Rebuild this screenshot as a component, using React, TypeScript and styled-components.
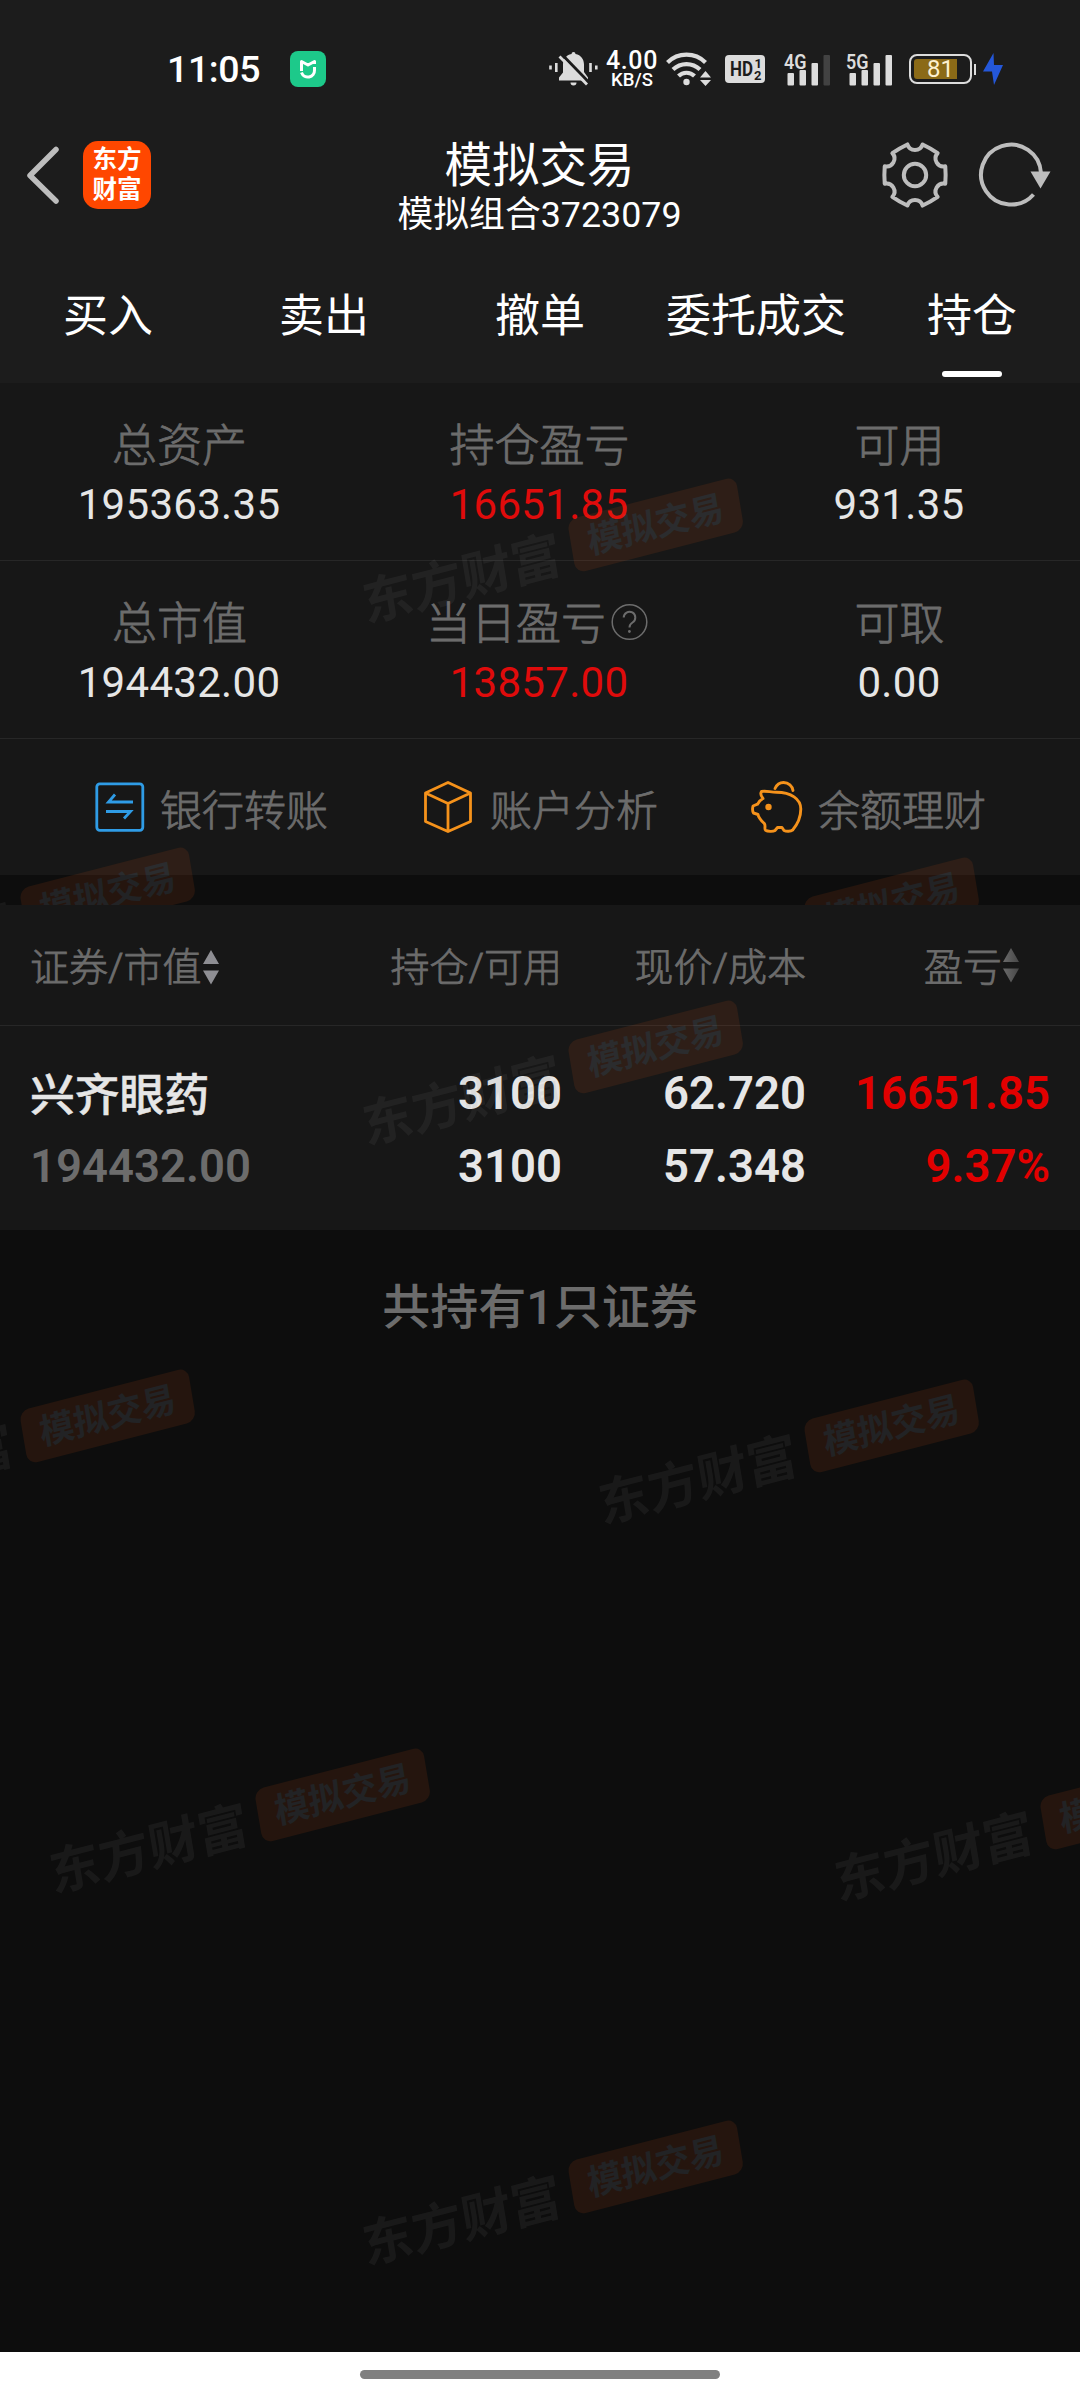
import React from "react";
import styled, { createGlobalStyle } from "styled-components";

const GlobalStyle = createGlobalStyle`
  * { box-sizing: border-box; }
  body { margin: 0; background: #0d0d0d; }
  svg { flex: none; overflow: visible; }
`;

const Screen = styled.div`
  width: 1080px;
  height: 2400px;
  display: flex;
  flex-direction: column;
  overflow: hidden;
  background: #0d0d0d;
  color: #fff;
  font-family: Roboto, "Noto Sans CJK SC", sans-serif;
`;

/* ---------- status bar ---------- */

const TopArea = styled.div`
  background: #1c1c1c;
  height: 383px;
  flex: none;
`;

const StatusBar = styled.div`
  height: 102px;
  padding: 36px 77px 0 167px;
  display: flex;
  align-items: flex-start;
  justify-content: space-between;
`;

const StatusGroup = styled.div`
  height: 66px;
  display: flex;
  align-items: center;
`;

const Clock = styled.span`
  width: 123px;
  font-size: 37.5px;
  line-height: 65px;
  font-weight: 500;
  letter-spacing: -0.4px;
`;

const StatusItem = styled.div<{ $gap: number }>`
  display: flex;
  flex: none;
  margin-left: ${(p) => p.$gap}px;
`;

const Speed = styled.div`
  width: 52px;
  display: flex;
  flex-direction: column;
  align-items: center;
  font-weight: 500;
`;

const SpeedValue = styled.span`
  font-size: 25px;
  line-height: 22px;
  height: 21px;
  letter-spacing: 0.6px;
`;

const SpeedUnit = styled.span`
  font-size: 18.5px;
  line-height: 18px;
`;

const HdBadge = styled.div`
  width: 40px;
  height: 28px;
  border-radius: 4px;
  background: #dcdcdc;
  color: #1c1c1c;
  display: flex;
  align-items: center;
  justify-content: center;
`;

const Battery = styled.div`
  width: 63px;
  height: 30px;
  border: 2px solid #dcdcdc;
  border-radius: 8px;
  padding: 3px;
  display: flex;
  position: relative;
`;

const BatteryFill = styled.div`
  width: 43px;
  height: 20px;
  border-radius: 3px 0 0 3px;
  background: #8b6a17;
`;

const BatteryText = styled.span`
  position: absolute;
  inset: 0;
  text-align: center;
  font-size: 24px;
  line-height: 27px;
  font-weight: 400;
  color: #fdf0cf;
`;

const BatteryCap = styled.div`
  width: 2px;
  height: 11px;
  margin-left: 2px;
  align-self: center;
  background: #dcdcdc;
`;

/* ---------- header ---------- */

const Header = styled.header`
  height: 145px;
  display: grid;
  grid-template-columns: 1fr auto 1fr;
  align-items: center;
  padding: 0 27px 0 26px;
`;

const HeaderSide = styled.div<{ $end?: boolean }>`
  display: flex;
  align-items: center;
  justify-content: ${(p) => (p.$end ? "flex-end" : "flex-start")};
  gap: ${(p) => (p.$end ? 30 : 24)}px;
  padding-right: ${(p) => (p.$end ? 2 : 0)}px;
`;

const Logo = styled.div`
  width: 68px;
  height: 68px;
  border-radius: 15px;
  background: #ff4700;
  display: flex;
  flex-direction: column;
  align-items: center;
  justify-content: center;
  font-size: 24.5px;
  line-height: 30px;
  font-weight: 700;
`;

const TitleBlock = styled.div`
  display: flex;
  flex-direction: column;
  align-items: center;
  padding-top: 23px;
`;

const Title = styled.h1`
  margin: 0;
  font-size: 47.5px;
  line-height: 58px;
  font-weight: 400;
`;

const Subtitle = styled.div`
  font-size: 35.8px;
  line-height: 40px;
`;

/* ---------- tabs ---------- */

const Tabs = styled.nav`
  display: grid;
  grid-template-columns: repeat(5, 1fr);
  height: 136px;
`;

const Tab = styled.div<{ $active?: boolean }>`
  position: relative;
  height: 136px;
  text-align: center;
  font-size: 45px;
  line-height: 139px;
  &::after {
    content: "";
    display: ${(p) => (p.$active ? "block" : "none")};
    position: absolute;
    left: 78px;
    bottom: 6px;
    width: 60px;
    height: 6px;
    border-radius: 3px;
    background: #fff;
  }
`;

/* ---------- account summary ---------- */

const thinText = `
  font-weight: 300;
  color: #6c6c6c;
  -webkit-text-stroke: 0.8px #6c6c6c;
`;

const SummarySection = styled.section`
  position: relative;
  overflow: hidden;
  height: 522px;
  flex: none;
`;

const SummaryRow = styled.div`
  height: 178px;
  display: grid;
  grid-template-columns: repeat(3, 1fr);
  padding-top: 38px;
  background: #171717;
  border-bottom: 1px solid #272727;
`;

const Stat = styled.div`
  display: flex;
  flex-direction: column;
  align-items: center;
`;

const StatLabel = styled.div<{ $help?: boolean }>`
  display: flex;
  align-items: center;
  gap: 5px;
  height: 52px;
  margin-right: ${(p) => (p.$help ? 6 : 1)}px;
  font-size: 45px;
  line-height: 52px;
  ${thinText}
  svg { margin-top: -6px; }
`;

const StatValue = styled.div<{ $up?: boolean }>`
  margin-right: 2px;
  font-size: 42px;
  line-height: 64px;
  letter-spacing: 0.3px;
  color: ${(p) => (p.$up ? "#e00b0b" : "#e6e6e6")};
`;

const Actions = styled.div`
  height: 136px;
  display: flex;
  justify-content: space-between;
  padding: 1px 94px 0 95px;
  background: #171717;
`;

const Action = styled.div<{ $gap: number; $shift?: number }>`
  display: flex;
  align-items: center;
  gap: ${(p) => p.$gap}px;
  margin-left: ${(p) => p.$shift ?? 0}px;
  font-size: 42px;
  ${thinText}
  svg { margin-top: -1px; }
`;

/* ---------- holdings table ---------- */

const HoldingsSection = styled.section`
  position: relative;
  overflow: hidden;
  flex: 1;
`;

const columns = `
  display: grid;
  grid-template-columns: 1fr 200px 244px 244px;
  padding: 0 30px 0 30px;
  background: #171717;
`;

const TableHead = styled.div`
  ${columns}
  height: 121px;
  padding-top: 5px;
  align-items: center;
  border-bottom: 1px solid #272727;
`;

const HeadCell = styled.div<{ $right?: boolean; $inset?: number }>`
  display: flex;
  align-items: center;
  justify-content: ${(p) => (p.$right ? "flex-end" : "flex-start")};
  padding-right: ${(p) => p.$inset ?? 0}px;
  font-size: 39px;
  line-height: 46px;
  ${thinText}
`;

const HoldingRow = styled.div`
  ${columns}
  height: 204px;
  padding-top: 31px;
  align-items: start;
`;

const Cell = styled.div<{ $right?: boolean; $tone?: "up" | "muted" }>`
  text-align: ${(p) => (p.$right ? "right" : "left")};
  height: 73px;
  font-size: 45.5px;
  line-height: 74px;
  font-weight: 600;
  color: ${(p) => (p.$tone === "up" ? "#e20000" : p.$tone === "muted" ? "#6c6c6c" : "#e6e6e6")};
`;

const StockName = styled(Cell)`
  font-size: 44.8px;
  line-height: 78px;
  font-weight: 500;
  -webkit-text-stroke: 0.5px #e6e6e6;
`;

const Total = styled.div`
  padding-top: 46px;
  text-align: center;
  font-size: 48px;
  line-height: 64px;
  font-weight: 500;
  color: #6c6c6c;
`;

const HomeBar = styled.footer`
  height: 48px;
  flex: none;
  padding-top: 18px;
  background: #fff;
`;

const HomePill = styled.div`
  width: 360px;
  height: 9px;
  margin: 0 auto;
  border-radius: 5px;
  background: #808080;
`;

/* ---------- watermark ---------- */

const Mark = styled.div`
  position: absolute;
  display: flex;
  align-items: center;
  width: 390px;
  height: 56px;
  opacity: 0.1;
  transform: rotate(-14.5deg) skewX(-5deg);
  white-space: nowrap;
  pointer-events: none;
`;

const MarkBrand = styled.span`
  width: 216px;
  margin-left: -4px;
  padding-top: 9px;
  font-size: 51px;
  line-height: 56px;
  font-weight: 700;
  color: #868686;
`;

const MarkBadge = styled.span`
  width: 174px;
  height: 54px;
  border-radius: 10px;
  background: #f35d17;
  color: #d7e1f5;
  text-align: center;
  font-size: 35px;
  line-height: 55px;
  font-weight: 700;
`;

// Offsets of the badge's top-left corner from the first mark of the tile.
const TILE: [number, number][] = [
  [569, 0],
  [21, 369],
  [805, 379],
  [256, 748],
  [1041, 756],
  [569, 1120],
];

function Watermark({ top, count }: { top: number; count: number }) {
  return (
    <>
      {TILE.slice(0, count).map(([x, y]) => (
        <Mark key={`${x}-${y}`} style={{ left: x - 209, top: top + y + 44 }}>
          <MarkBrand>东方财富</MarkBrand>
          <MarkBadge>模拟交易</MarkBadge>
        </Mark>
      ))}
    </>
  );
}

/* ---------- icons ---------- */

const ICON = "#dcdcdc";

const MiHomeIcon = () => (
  <svg width="36" height="36" viewBox="0 0 36 36">
    <rect width="36" height="36" rx="8" fill="#1dc98a" />
    <path d="M11.500 20V10.500L18 14l6.500-3.500V13" fill="none" stroke="#fff" strokeWidth="3" strokeLinejoin="round" />
    <path d="M24.500 16v3a6.700 6.700 0 0 1-13 2.600" fill="none" stroke="#fff" strokeWidth="3" />
  </svg>
);

const BellOffIcon = () => (
  <svg width="49" height="34" viewBox="0 0 49 34">
    <path d="M24.500 0a2 2 0 0 1 2 2c5.500 1 8.500 5.400 8.500 10.500v7.500l4 5.500V28.500H10V25.500l4-5V12.500C14 7.400 17 3 22.500 2a2 2 0 0 1 2-2z" fill={ICON} />
    <path d="M21.500 30.500h6a3 3 0 0 1-6 0z" fill={ICON} />
    <path d="M12.500 2l28 29" stroke="#1c1c1c" strokeWidth="3" />
    <path d="M10.500 4.500l27.500 28" stroke={ICON} strokeWidth="2.800" />
    <path d="M1.500 13.500v4M7.300 11v9M41.500 11v9M47.300 13.500v4" stroke={ICON} strokeWidth="2.600" />
  </svg>
);

const WifiIcon = () => (
  <svg width="45" height="34" viewBox="0 0 45 34">
    <g fill="none" stroke={ICON} strokeWidth="4.200">
      <path d="M1.500 10.500a27 27 0 0 1 38 0" />
      <path d="M7 17.500a19.500 19.500 0 0 1 27 0" />
      <path d="M12.500 24a11.500 11.500 0 0 1 16 0" />
    </g>
    <circle cx="20.500" cy="30" r="3.200" fill={ICON} />
    <path d="M39.500 19l5.500 6.500H34zM39.500 34l5.500-6H34z" fill={ICON} />
  </svg>
);

const HdMark = () => (
  <svg width="40" height="28" viewBox="0 0 40 28" fill="#1c1c1c" fontFamily="Roboto, sans-serif" fontWeight="700">
    <text x="5" y="21" fontSize="20" textLength="23" lengthAdjust="spacingAndGlyphs">HD</text>
    <text x="29.500" y="13" fontSize="13">1</text>
    <text x="29" y="25" fontSize="13">2</text>
  </svg>
);

const SignalIcon = ({ label, dim }: { label: string; dim?: boolean }) => (
  <svg width="47" height="33" viewBox="0 0 47 33" fill={ICON}>
    <text x="0" y="15.500" fontSize="20" fontWeight="600" fontFamily="Roboto, sans-serif" textLength="22.500" lengthAdjust="spacingAndGlyphs">
      {label}
    </text>
    <rect x="3.500" y="20" width="6.500" height="12.500" rx="1" />
    <rect x="15.500" y="17" width="6.500" height="15.500" rx="1" />
    <rect x="27.500" y="10" width="6.500" height="22.500" rx="1" />
    <rect x="39.500" y="2" width="6.500" height="30.500" rx="1" fill={dim ? "#424242" : ICON} />
  </svg>
);

const BoltIcon = () => (
  <svg width="20" height="32" viewBox="0 0 20 32">
    <path d="M10.500 0L0 18.500h9L11 32 20 12h-9z" fill="#2457d9" />
  </svg>
);

const BackIcon = () => (
  <svg width="33" height="58" viewBox="0 0 33 58">
    <path d="M30 3.500L4 29.500 30 55" fill="none" stroke="#bdbdbd" strokeWidth="5.500" strokeLinecap="round" strokeLinejoin="round" />
  </svg>
);

function gearPath(): string {
  const point = (deg: number, r: number) => {
    const a = (deg * Math.PI) / 180;
    return `${(34 + r * Math.cos(a)).toFixed(2)} ${(34 + r * Math.sin(a)).toFixed(2)}`;
  };
  let d = `M${point(-16, 31.5)}`;
  for (let k = 0; k < 6; k++) {
    d += `Q${point(k * 60, 31)} ${point(k * 60 + 16, 31.5)}`;
    d += `A8 8 0 0 0 ${point(k * 60 + 44, 31.5)}`;
  }
  return d + "Z";
}

const GearIcon = () => (
  <svg width="68" height="68" viewBox="0 0 68 68" fill="none" stroke="#bdbdbd" strokeWidth="4" strokeLinejoin="round">
    <path d={gearPath()} />
    <circle cx="34" cy="34" r="11.200" />
  </svg>
);

const RefreshIcon = () => (
  <svg width="72" height="68" viewBox="0 0 72 68">
    <path d="M54.500 53.500A30 30 0 1 1 62 32" fill="none" stroke="#bdbdbd" strokeWidth="4" />
    <path d="M51.500 30.500h20L61.500 47.500z" fill="#bdbdbd" />
  </svg>
);

const HelpIcon = () => (
  <svg width="37" height="38" viewBox="0 0 37 38" fill="none" stroke="#6c6c6c">
    <circle cx="18.500" cy="19" r="17.300" strokeWidth="1.500" />
    <path d="M12.700 14.500a5.800 5.800 0 1 1 8.800 5c-2.200 1.400-3 2.200-3 5" strokeWidth="2" />
    <circle cx="18.400" cy="28.500" r="1.400" fill="#6c6c6c" stroke="none" />
  </svg>
);

const TransferIcon = () => (
  <svg width="50" height="50" viewBox="0 0 50 50" fill="none" stroke="#2f9ce6" strokeWidth="2.800">
    <rect x="1.800" y="1.800" width="46" height="46.500" rx="3" />
    <path d="M38 20H13.500l6.500-7.500M11 29.500h24.500l-6.500 7" />
  </svg>
);

const CubeIcon = () => (
  <svg width="48" height="52" viewBox="0 0 48 52" fill="none" stroke="#f5921b" strokeWidth="2.800" strokeLinejoin="round">
    <path d="M24 1.500L46.500 12v28.500L24 50.500 1.500 40.500V12zM1.500 12L24 22.500 46.500 12M24 22.500v28" />
  </svg>
);

const PiggyIcon = () => (
  <svg width="52" height="52" viewBox="0 0 52 52" fill="none" stroke="#f5921b" strokeWidth="2.900" strokeLinejoin="round" strokeLinecap="round">
    <path d="M24 7.500C26 3 29 1.500 32.500 1.500c5 0 9 3.500 9.500 8" />
    <path d="M10.500 10.500c4-1 9 .7 15 .7C40 11.200 49.800 18 49.800 28c0 9-4.300 16.500-8.300 21.200-1.500 1.300-6.500 1.300-8.500.3l-2-3h-4.500l-2.500 3c-2 1.300-7.500 1-9.500-.3-1.500-1.200.5-4.700-1.200-6.700C9.500 39 7.500 37 7 33.500L2.500 32c-1.200-2-1-5-.5-7l4.500-1.800c1.500-2.700 2.500-4.200 5.500-5.700-2-2.300-3-4.500-1.500-7z" />
    <circle cx="17.500" cy="26" r="3.200" fill="#f5921b" stroke="none" />
  </svg>
);

const SortIcon = ({ dim }: { dim?: boolean }) => (
  <svg width="18" height="35" viewBox="0 0 18 35" stroke="none" style={{ marginTop: dim ? -5 : -1 }}>
    <defs>
      <linearGradient id="sortFade" x1="0" x2="1">
        <stop offset="0" stopColor="#6a6a6a" />
        <stop offset="1" stopColor="#474747" />
      </linearGradient>
    </defs>
    <path d="M9 0l8 14H1zM9 34.500l8-14H1z" fill={dim ? "url(#sortFade)" : "#8e8e93"} />
  </svg>
);

/* ---------- data ---------- */

const TABS = ["买入", "卖出", "撤单", "委托成交", "持仓"];

type StatData = { label: string; value: string; up?: boolean; help?: boolean };

const SUMMARY: StatData[][] = [
  [
    { label: "总资产", value: "195363.35" },
    { label: "持仓盈亏", value: "16651.85", up: true },
    { label: "可用", value: "931.35" },
  ],
  [
    { label: "总市值", value: "194432.00" },
    { label: "当日盈亏", value: "13857.00", up: true, help: true },
    { label: "可取", value: "0.00" },
  ],
];

export default function App() {
  return (
    <Screen>
      <GlobalStyle />
      <TopArea>
        <StatusBar>
          <StatusGroup>
            <Clock>11:05</Clock>
            <MiHomeIcon />
          </StatusGroup>
          <StatusGroup>
            <StatusItem $gap={0}><BellOffIcon /></StatusItem>
            <StatusItem $gap={8}>
              <Speed>
                <SpeedValue>4.00</SpeedValue>
                <SpeedUnit>KB/S</SpeedUnit>
              </Speed>
            </StatusItem>
            <StatusItem $gap={8}><WifiIcon /></StatusItem>
            <StatusItem $gap={14}><HdBadge><HdMark /></HdBadge></StatusItem>
            <StatusItem $gap={19}><SignalIcon label="4G" dim /></StatusItem>
            <StatusItem $gap={15}><SignalIcon label="5G" /></StatusItem>
            <StatusItem $gap={16}>
              <Battery>
                <BatteryFill />
                <BatteryText>81</BatteryText>
              </Battery>
              <BatteryCap />
            </StatusItem>
            <StatusItem $gap={7}><BoltIcon /></StatusItem>
          </StatusGroup>
        </StatusBar>
        <Header>
          <HeaderSide>
            <BackIcon />
            <Logo>
              <span>东方</span>
              <span>财富</span>
            </Logo>
          </HeaderSide>
          <TitleBlock>
            <Title>模拟交易</Title>
            <Subtitle>模拟组合3723079</Subtitle>
          </TitleBlock>
          <HeaderSide $end>
            <GearIcon />
            <RefreshIcon />
          </HeaderSide>
        </Header>
        <Tabs>
          {TABS.map((t) => (
            <Tab key={t} $active={t === "持仓"}>{t}</Tab>
          ))}
        </Tabs>
      </TopArea>

      <SummarySection>
        {SUMMARY.map((row, i) => (
          <SummaryRow key={i}>
            {row.map((s) => (
              <Stat key={s.label}>
                <StatLabel $help={s.help}>
                  {s.label}
                  {s.help ? <HelpIcon /> : null}
                </StatLabel>
                <StatValue $up={s.up}>{s.value}</StatValue>
              </Stat>
            ))}
          </SummaryRow>
        ))}
        <Actions>
          <Action $gap={15}><TransferIcon />银行转账</Action>
          <Action $gap={18} $shift={3}><CubeIcon />账户分析</Action>
          <Action $gap={15}><PiggyIcon />余额理财</Action>
        </Actions>
        <Watermark top={96} count={3} />
      </SummarySection>

      <HoldingsSection>
        <TableHead>
          <HeadCell>证券/市值<SortIcon /></HeadCell>
          <HeadCell $right>持仓/可用</HeadCell>
          <HeadCell $right>现价/成本</HeadCell>
          <HeadCell $right $inset={30}>盈亏<SortIcon dim /></HeadCell>
        </TableHead>
        <HoldingRow>
          <div>
            <StockName>兴齐眼药</StockName>
            <Cell $tone="muted">194432.00</Cell>
          </div>
          <div>
            <Cell $right>3100</Cell>
            <Cell $right>3100</Cell>
          </div>
          <div>
            <Cell $right>62.720</Cell>
            <Cell $right>57.348</Cell>
          </div>
          <div>
            <Cell $right $tone="up">16651.85</Cell>
            <Cell $right $tone="up">9.37%</Cell>
          </div>
        </HoldingRow>
        <Total>共持有1只证券</Total>
        <Watermark top={96} count={6} />
      </HoldingsSection>

      <HomeBar>
        <HomePill />
      </HomeBar>
    </Screen>
  );
}
